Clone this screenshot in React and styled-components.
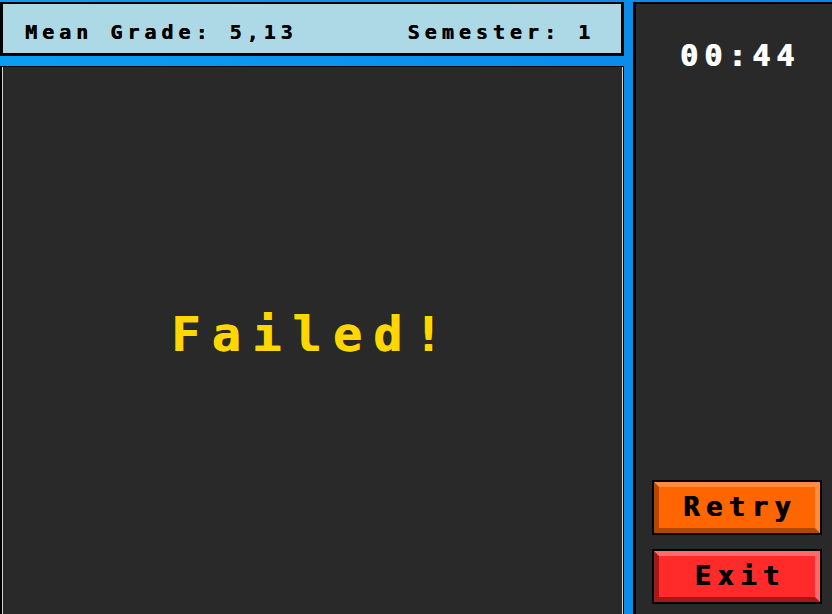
import React from 'react'
import styled, { createGlobalStyle, css } from 'styled-components'

const GlobalStyle = createGlobalStyle`
  * {
    box-sizing: border-box;
  }
  body {
    margin: 0;
    background: linear-gradient(90deg, #0a9ef2, #0a86ea);
    font-family: "DejaVu Sans Mono", "Liberation Mono", monospace;
    font-weight: bold;
  }
`;

const Screen = styled.div`
  display: flex;
  gap: 9px;
  height: 100vh;
  padding-top: 2px;
  overflow: hidden;
`;

const LeftColumn = styled.div`
  width: 624px;
  display: flex;
  flex-direction: column;
  gap: 10px;
`;

const InfoBar = styled.div`
  height: 54px;
  flex-shrink: 0;
  display: flex;
  justify-content: space-between;
  align-items: center;
  padding: 7px 26px 0 22px;
  background-color: #add8e6;
  border: 3px solid #000;
  border-top-width: 2px;
`;

const Stat = styled.span`
  font-size: 20px;
  letter-spacing: 5px;
  color: #000;
  white-space: pre;
  text-shadow: 0.5px 0 0 #000;
`;

const Board = styled.div`
  flex: 1;
  display: flex;
  justify-content: center;
  align-items: center;
  padding-bottom: 14px;
  background-color: #292929;
  border: 2px solid #000;
  border-top-width: 1px;
  border-right-width: 1px;
  border-bottom: none;
  box-shadow: inset 1px 0 #d4d4d4, inset -1px 0 #d4d4d4;
`;

const Message = styled.div`
  font-size: 48px;
  letter-spacing: 11.5px;
  color: #ffd700;
  text-shadow: 1px 0 0 #ffd700;
`;

const SidePanel = styled.div`
  flex: 1;
  display: flex;
  flex-direction: column;
  padding: 0 10px 10px 16px;
  background-color: #292929;
  border: 3px solid #000;
  border-top-width: 2px;
  border-right: none;
  border-bottom: none;
`;

const Timer = styled.div`
  margin-top: 37px;
  text-align: center;
  font-size: 30px;
  line-height: 1;
  letter-spacing: 6px;
  padding-left: 6px;
  color: #fff;
  text-shadow: 1px 0 0 #fff;
`;

const Actions = styled.div`
  margin-top: auto;
  display: flex;
  flex-direction: column;
  gap: 14px;
`;

const tones = {
  retry: css`
    background-color: #ff6600;
    border-color: #ff8c42 #ff8c42 #b34700 #b34700;
  `,
  exit: css`
    background-color: #ff2b2b;
    border-color: #ff6b6b #ff6b6b #a01a1a #a01a1a;
  `,
};

const GameButton = styled.button`
  margin: 2px;
  height: 51px;
  border: 5px solid;
  ${props => tones[props.tone]}
  box-shadow: 0 0 0 2px #000;
  font-family: inherit;
  font-weight: bold;
  font-size: 27px;
  letter-spacing: 6.5px;
  padding: 0 0 2px 6px;
  color: #000;
  text-shadow: 1px 0 0 #000;
  cursor: pointer;
`;

const App = () => {
  return (
    <>
      <GlobalStyle />
      <Screen>
        <LeftColumn>
          <InfoBar>
            <Stat>Mean Grade: 5,13</Stat>
            <Stat>Semester: 1</Stat>
          </InfoBar>
          <Board>
            <Message>Failed!</Message>
          </Board>
        </LeftColumn>
        <SidePanel>
          <Timer>00:44</Timer>
          <Actions>
            <GameButton tone="retry">Retry</GameButton>
            <GameButton tone="exit">Exit</GameButton>
          </Actions>
        </SidePanel>
      </Screen>
    </>
  )
}

export default App
